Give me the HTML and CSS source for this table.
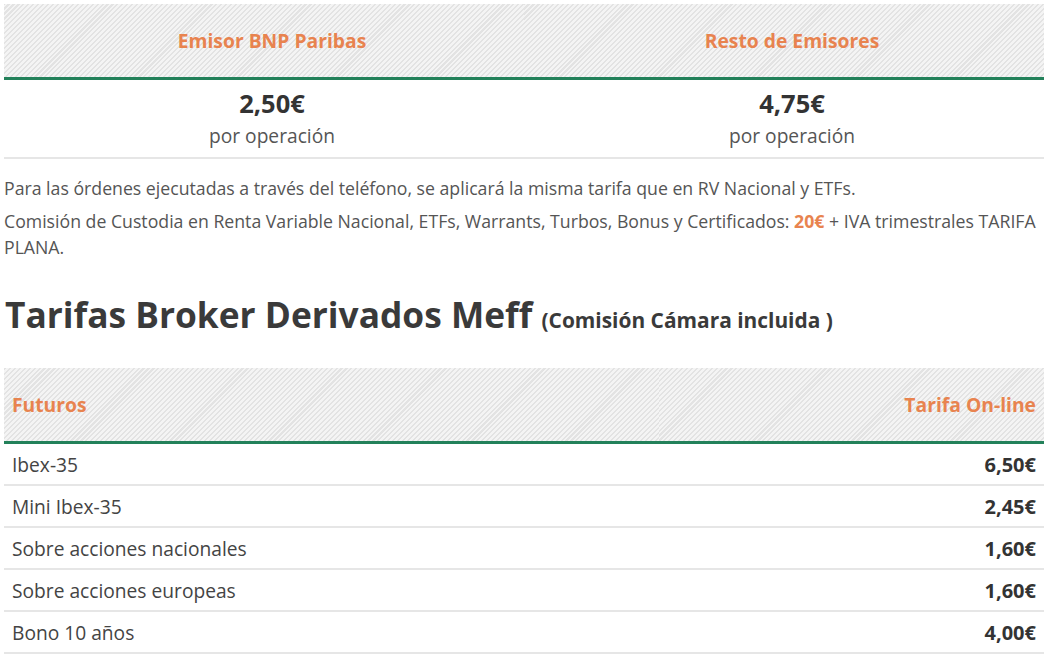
FILE: index.html
```html
<!DOCTYPE html>
<html lang="es">
  <head>
    <meta charset="UTF-8" />
    <meta name="viewport" content="width=device-width, initial-scale=1.0" />
    <title>Tarifas Broker</title>
    <link rel="stylesheet" href="styles.css">
  </head>
  <body>
    <div class="page">
      <table class="tarifas tarifas-centro">
        <thead>
          <tr>
            <th>Emisor BNP Paribas</th>
            <th>Resto de Emisores</th>
          </tr>
        </thead>
        <tbody>
          <tr>
            <td><strong class="precio">2,50€</strong><br />por operación</td>
            <td><strong class="precio">4,75€</strong><br />por operación</td>
          </tr>
        </tbody>
      </table>

      <p class="nota">Para las órdenes ejecutadas a través del teléfono, se aplicará la misma tarifa que en RV Nacional y ETFs.</p>
      <p class="nota">Comisión de Custodia en Renta Variable Nacional, ETFs, Warrants, Turbos, Bonus y Certificados: <strong class="naranja">20€</strong> + IVA trimestrales TARIFA PLANA.</p>

      <h2 class="titulo">Tarifas Broker Derivados Meff <small>(Comisión Cámara incluida )</small></h2>

      <table class="tarifas tarifas-lista">
        <thead>
          <tr>
            <th class="izq">Futuros</th>
            <th class="der">Tarifa On-line</th>
          </tr>
        </thead>
        <tbody>
          <tr><td>Ibex-35</td><td class="der"><strong>6,50€</strong></td></tr>
          <tr><td>Mini Ibex-35</td><td class="der"><strong>2,45€</strong></td></tr>
          <tr><td>Sobre acciones nacionales</td><td class="der"><strong>1,60€</strong></td></tr>
          <tr><td>Sobre acciones europeas</td><td class="der"><strong>1,60€</strong></td></tr>
          <tr><td>Bono 10 años</td><td class="der"><strong>4,00€</strong></td></tr>
        </tbody>
      </table>
    </div>
  </body>
</html>
```

FILE: styles.css
```css
body {
  font-family: "Open Sans", Arial, sans-serif;
  background-color: #fff;
  color: #555;
  margin: 0;
  padding: 0;
}

.page {
  padding: 4px 1px 0 4px;
}

.tarifas {
  width: 100%;
  border-collapse: collapse;
}

.tarifas th {
  background-color: #f1f1f1;
  background-image: repeating-linear-gradient(
    -45deg,
    #f4f4f4 0px,
    #f4f4f4 2px,
    #e3e3e3 2px,
    #e3e3e3 3.5px
  );
  color: #e8834f;
  font-size: 19.3px;
  font-weight: bold;
  height: 73px;
  padding: 0 8px;
  border-bottom: 3px solid #23815a;
}

.tarifas td {
  border-bottom: 2px solid #e6e6e6;
  font-size: 19.2px;
}

.tarifas-centro th,
.tarifas-centro td {
  width: 50%;
  text-align: center;
  padding-left: 16px;
  padding-right: 0;
}

.tarifas-centro td {
  height: 73px;
  line-height: 30px;
  color: #555;
  padding-top: 3px;
}

.precio {
  font-size: 25.5px;
  color: #333;
}

.nota {
  font-size: 17.7px;
  line-height: 26px;
  margin: 0 0 7px 0;
  padding-right: 6px;
}

.tarifas-centro + .nota {
  margin-top: 16px;
}

.naranja {
  color: #e8834f;
}

.titulo {
  font-size: 35.3px;
  font-weight: bold;
  color: #3a3a3a;
  margin: 30px 0 30px 1px;
}

.titulo small {
  font-size: 20.9px;
}

.tarifas-lista th {
  height: 73px;
  padding-top: 0;
}

.tarifas-lista td {
  height: 40px;
  padding: 0 8px;
  color: #444;
}

.tarifas-lista td strong {
  font-size: 20px;
  color: #333;
}

.izq {
  text-align: left;
}

.der {
  text-align: right;
}
```
